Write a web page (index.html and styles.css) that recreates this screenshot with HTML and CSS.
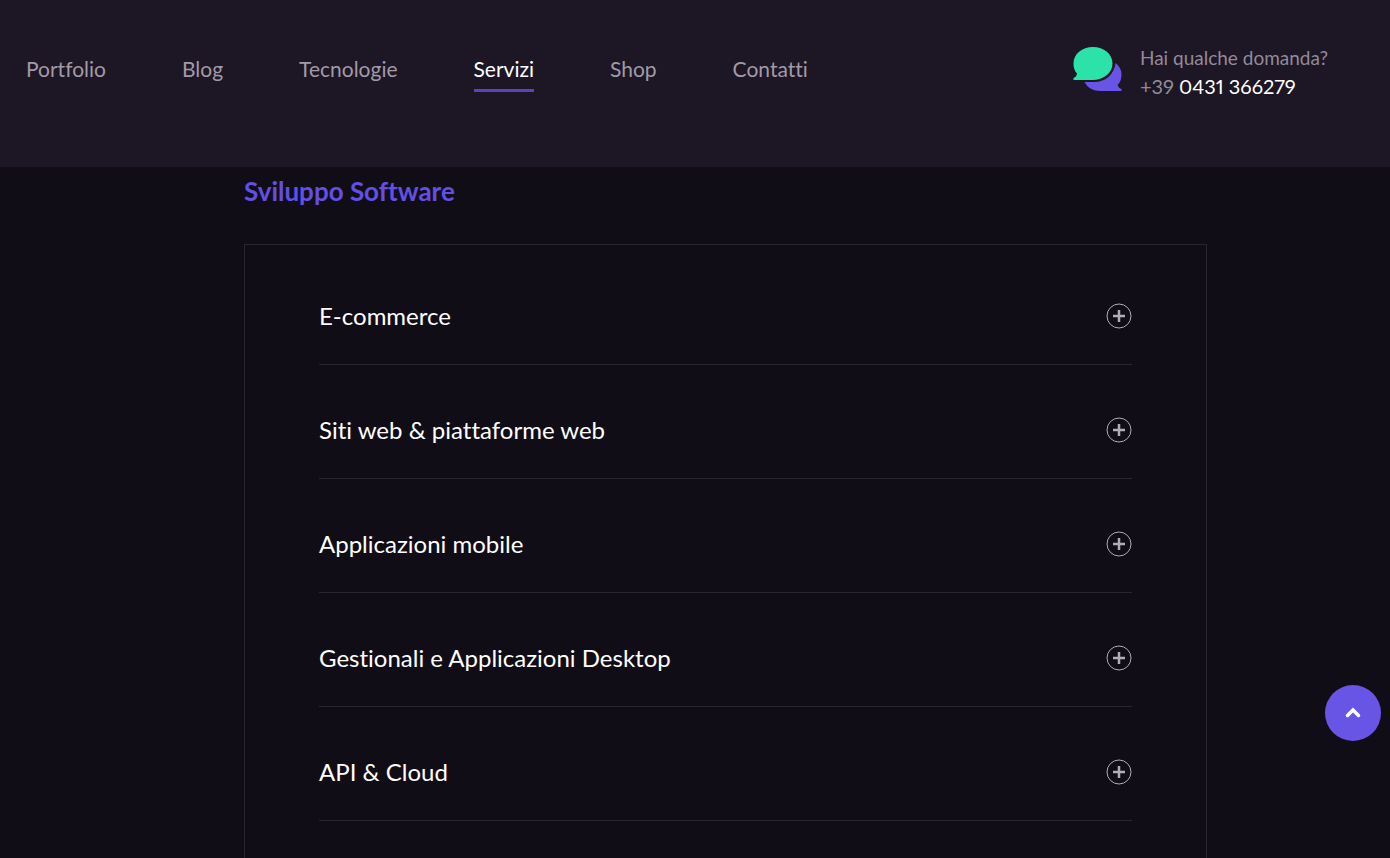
FILE: index.html
```html
<!DOCTYPE html>
<html lang="it">
<head>
<meta charset="utf-8">
<meta name="viewport" content="width=device-width, initial-scale=1">
<title>Servizi</title>
<link rel="stylesheet" href="styles.css">
</head>
<body>
<header class="header">
  <nav class="nav" aria-label="Principale">
    <a class="nav-link" href="#">Portfolio</a>
    <a class="nav-link" href="#">Blog</a>
    <a class="nav-link" href="#">Tecnologie</a>
    <a class="nav-link active" href="#" aria-current="page">Servizi</a>
    <a class="nav-link" href="#">Shop</a>
    <a class="nav-link" href="#">Contatti</a>
  </nav>
  <div class="contact">
    <svg class="chat" viewBox="0 0 48 45" aria-hidden="true">
      <path fill="#6855e5" d="M42 16C46 19 48 23 48 27C48 32 47 35 44 38Q45 41 48 42V44H27C20 44 14 41 11 35H21C32 35 41 27 42 16Z"/>
      <path fill="#2be3a9" d="M19.500 0C30.500 0 39 7 39 16.500S30 33 19 33H0V31Q3 30 3.500 26.500C1 24 0 20.500 0 16.500C0 7 8.500 0 19.500 0Z"/>
    </svg>
    <div>
      <p class="question">Hai qualche domanda?</p>
      <a class="phone" href="tel:+390431366279">+39 <span class="number">0431 366279</span></a>
    </div>
  </div>
</header>
<main class="main">
  <h2 class="title">Sviluppo Software</h2>
  <div class="panel">
    <h3 class="item"><button class="toggle" type="button" aria-expanded="false">E-commerce
      <svg class="plus" viewBox="0 0 26 26" aria-hidden="true"><circle cx="13" cy="13" r="12"/><path d="M13 7V19M7 13H19"/></svg></button></h3>
    <h3 class="item"><button class="toggle" type="button" aria-expanded="false">Siti web &amp; piattaforme web
      <svg class="plus" viewBox="0 0 26 26" aria-hidden="true"><circle cx="13" cy="13" r="12"/><path d="M13 7V19M7 13H19"/></svg></button></h3>
    <h3 class="item"><button class="toggle" type="button" aria-expanded="false">Applicazioni mobile
      <svg class="plus" viewBox="0 0 26 26" aria-hidden="true"><circle cx="13" cy="13" r="12"/><path d="M13 7V19M7 13H19"/></svg></button></h3>
    <h3 class="item"><button class="toggle" type="button" aria-expanded="false">Gestionali e Applicazioni Desktop
      <svg class="plus" viewBox="0 0 26 26" aria-hidden="true"><circle cx="13" cy="13" r="12"/><path d="M13 7V19M7 13H19"/></svg></button></h3>
    <h3 class="item"><button class="toggle" type="button" aria-expanded="false">API &amp; Cloud
      <svg class="plus" viewBox="0 0 26 26" aria-hidden="true"><circle cx="13" cy="13" r="12"/><path d="M13 7V19M7 13H19"/></svg></button></h3>
  </div>
</main>
<button class="to-top" type="button" aria-label="Torna su">
  <svg class="chevron" viewBox="0 0 16 12" aria-hidden="true"><path d="M2.500 8.500L8 3L13.500 8.500"/></svg>
</button>
</body>
</html>
```
FILE: styles.css
```css
* {
  box-sizing: border-box;
}

body {
  display: flex;
  flex-direction: column;
  min-height: 100vh;
  margin: 0;
  background: #110d16;
  color: #fff;
  font-family: Lato, "Open Sans", sans-serif;
  font-variant-ligatures: none;
  font-variant-numeric: proportional-nums;
}

.header {
  display: flex;
  justify-content: space-between;
  align-items: flex-start;
  padding: 47px 62px 64px 26px;
  background: #1d1624;
}

.nav {
  display: flex;
  gap: 76px;
  padding-top: 7px;
}

.nav-link {
  padding-bottom: 5px;
  border-bottom: 3px solid transparent;
  color: #a19aa8;
  font-size: 21px;
  line-height: 30px;
  text-decoration: none;
}

.nav-link.active {
  border-color: #5746b8;
  color: #fff;
}

.contact {
  display: flex;
  gap: 18px;
}

.chat {
  width: 49px;
  height: 45px;
}

.question {
  margin: 0;
  color: #928a9b;
  font-size: 19px;
  line-height: 22px;
}

.phone {
  display: block;
  color: #928a9b;
  font-size: 20px;
  line-height: 34px;
  text-decoration: none;
}

.number {
  color: #fff;
}

.main {
  display: flex;
  flex: 1;
  flex-direction: column;
  padding: 8px 183px 0 244px;
}

.title {
  margin: 0 0 37px;
  color: #6250e4;
  font-size: 26px;
  font-weight: 700;
  line-height: 32px;
}

.panel {
  flex: 1;
  padding: 6px 74px 0;
  border: 1px solid #2a2630;
  border-bottom: 0;
}

.item {
  margin: 0;
  border-bottom: 1px solid #2a2630;
  font-size: 24px;
  font-weight: 400;
}

.toggle {
  display: flex;
  justify-content: space-between;
  align-items: center;
  width: 100%;
  padding: 49px 0 32px;
  border: 0;
  background: none;
  color: #fff;
  font: inherit;
  line-height: 32px;
  text-align: left;
}

.plus {
  width: 26px;
  height: 26px;
  fill: none;
  stroke: #b2abb9;
}

.plus path {
  stroke-width: 2.5;
}

.to-top {
  position: fixed;
  right: 9px;
  bottom: 117px;
  display: flex;
  justify-content: center;
  align-items: center;
  width: 56px;
  height: 56px;
  padding: 0;
  border: 0;
  border-radius: 50%;
  background: #6855e5;
}

.chevron {
  width: 16px;
  height: 12px;
  fill: none;
  stroke: #fff;
  stroke-width: 3.5;
  stroke-linecap: round;
}
```
